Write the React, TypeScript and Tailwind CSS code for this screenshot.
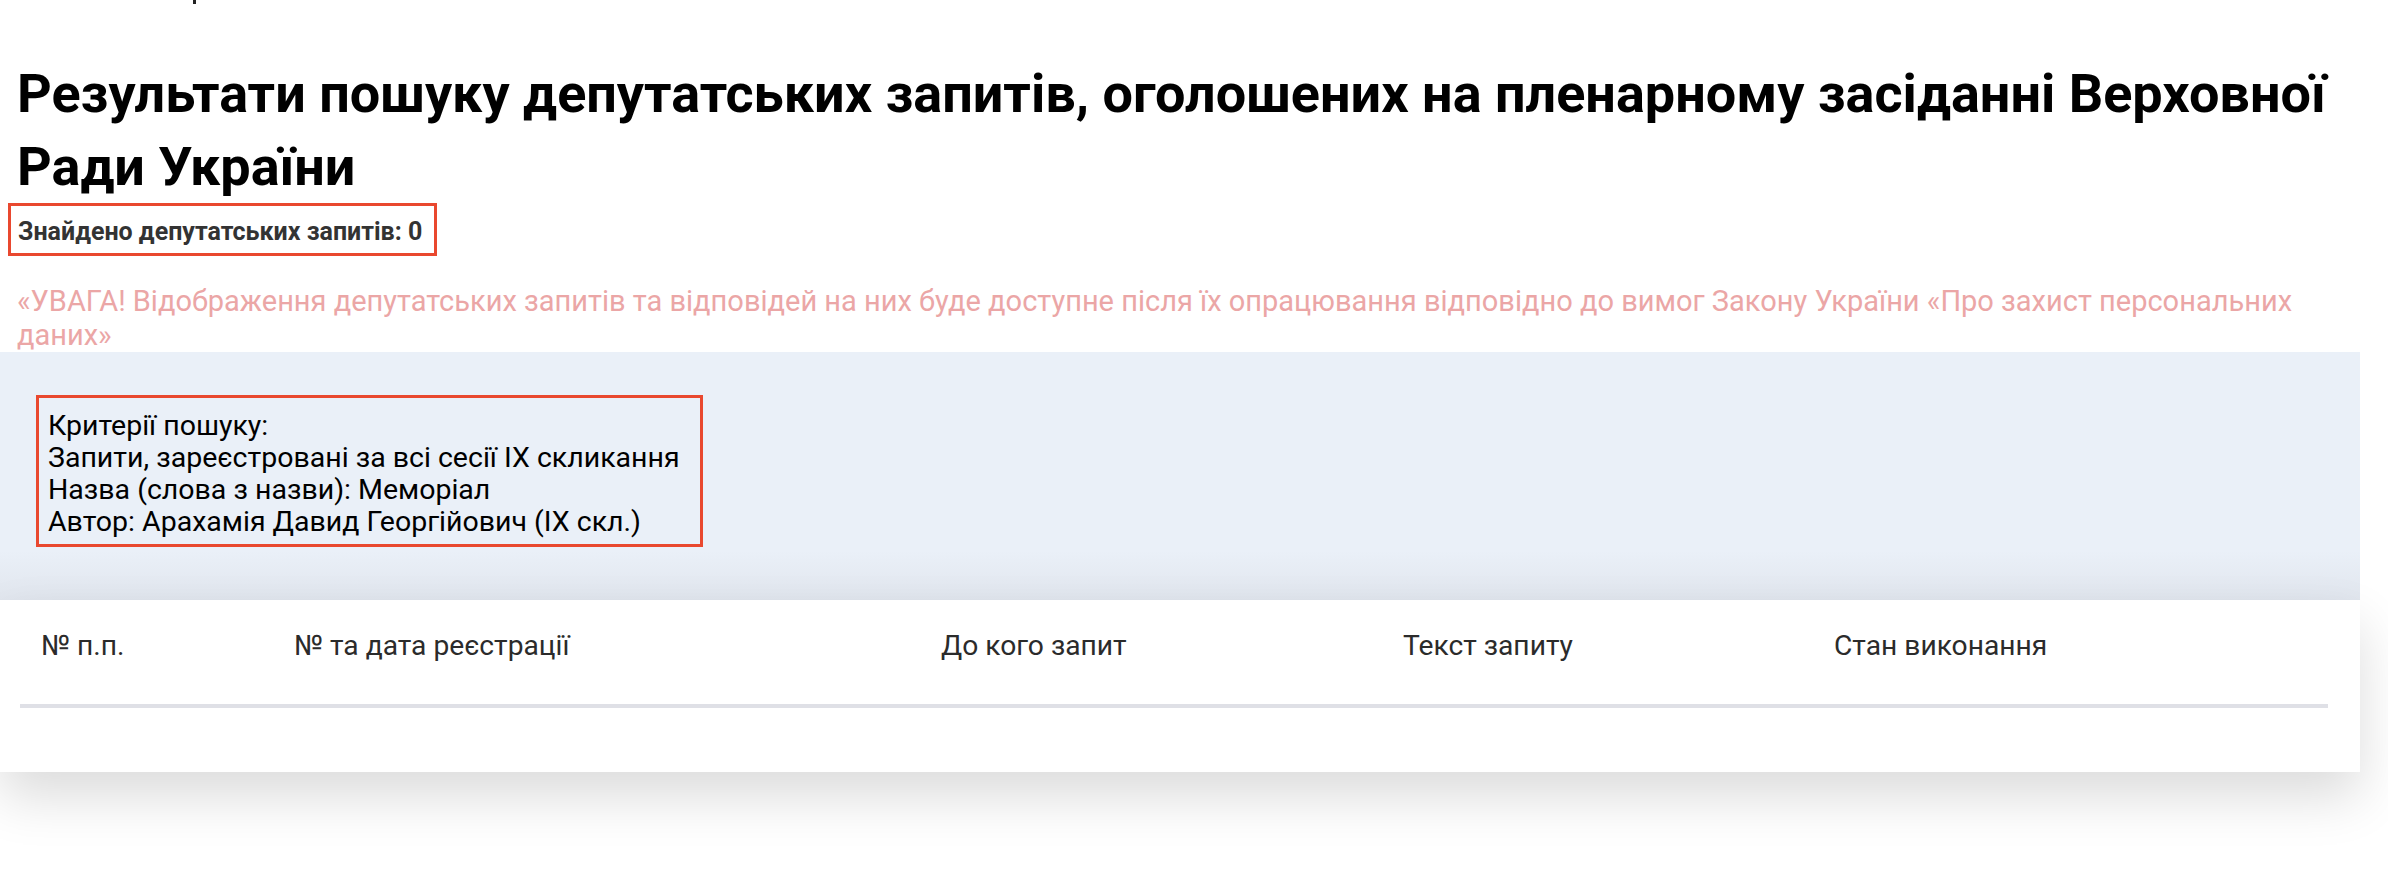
import React from 'react'

const columns = ['№ п.п.', '№ та дата реєстрації', 'До кого запит', 'Текст запиту', 'Стан виконання']

const criteria = [
  'Критерії пошуку:',
  'Запити, зареєстровані за всі сесії IX скликання',
  'Назва (слова з назви): Меморіал',
  'Автор: Арахамія Давид Георгійович (IX скл.)',
]

export default function App() {
  return (
    <div className="min-h-screen bg-white font-['Roboto',_'Noto_Sans',_sans-serif] antialiased">
      <div className="w-[2360px]">
        {/* cut-off breadcrumb above */}
        <div className="h-[4px]">
          <div className="ml-[193px] h-[4px] w-[3px] bg-[#222]" />
        </div>

        <div className="px-[17px]">
          <h1 className="mt-[53px] text-[54px] leading-[73px] font-bold text-black">
            Результати пошуку депутатських запитів, оголошених на пленарному засіданні Верховної Ради України
          </h1>
        </div>

        <div className="pl-[8px]">
          <div className="inline-block border-[3px] border-[#e9482f] pl-[7px] pr-[12px] pt-[11px] pb-[6px] text-[25px] leading-[30px] font-bold text-[#333]">
            Знайдено депутатських запитів: 0
          </div>
        </div>

        <p className="mt-[28px] px-[17px] text-[29px] leading-[34px] text-[#eba6a6]">
          «УВАГА! Відображення депутатських запитів та відповідей на них буде доступне після їх опрацювання відповідно до вимог Закону України «Про захист персональних даних»
        </p>

        {/* search criteria */}
        <div className="bg-[linear-gradient(to_bottom,#eaf0f8_0%,#eaf0f8_80%,#e1e6ee_100%)] pt-[43px] pb-[53px] pl-[36px]">
          <div className="inline-block border-[3px] border-[#e9482f] pl-[9px] pr-[20px] pt-[12px] pb-[6px] text-[28.5px] leading-[32px] text-black">
            {criteria.map((line) => (
              <div key={line}>{line}</div>
            ))}
          </div>
        </div>

        {/* results table */}
        <div className="relative bg-white pb-[64px] shadow-[0_25px_50px_rgba(0,0,0,0.14)]">
          <div className="ml-[20px] mr-[32px]">
            <div className="grid grid-cols-[253px_647px_462px_431px_1fr] border-b-[4px] border-[#dfe0e6] pt-[30px] pb-[42px] text-[28.2px] leading-[32px] text-[#2b2b2b]">
              {columns.map((c) => (
                <div key={c} className="px-[21px]">
                  {c}
                </div>
              ))}
            </div>
          </div>
        </div>
      </div>
    </div>
  )
}
